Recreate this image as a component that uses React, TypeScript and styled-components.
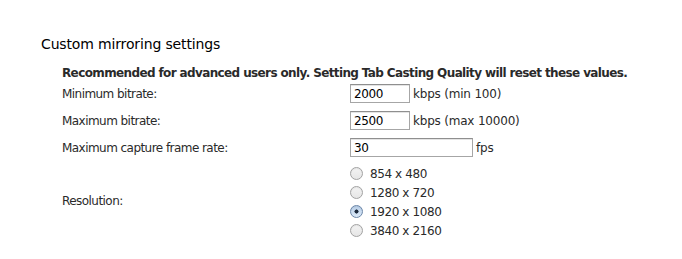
import { useState } from 'react';
import styled, { createGlobalStyle } from 'styled-components';

const GlobalStyle = createGlobalStyle`
  html, body {
    margin: 0;
    padding: 0;
    background: #fff;
  }
  body {
    font-family: 'DejaVu Sans', 'Liberation Sans', sans-serif;
    color: #000;
  }
`;

const Section = styled.section`
  padding: 34px 0 0 41px;
`;

const Title = styled.h3`
  margin: 0;
  font-size: 14px;
  font-weight: normal;
  line-height: 20px;
  letter-spacing: -0.15px;
  color: #000;
`;

const Body = styled.div`
  margin: 10px 0 0 21px;
`;

const Note = styled.div`
  font-size: 12px;
  font-weight: bold;
  line-height: 18px;
  color: #2a2a2a;
  letter-spacing: -0.62px;
`;

const Grid = styled.div`
  display: grid;
  grid-template-columns: 288px auto;
  align-items: center;
  margin-top: -2px;
`;

const Label = styled.label<{ $height?: number }>`
  font-size: 12px;
  line-height: 16px;
  color: #2a2a2a;
  letter-spacing: -0.55px;
  height: ${(p) => (p.$height ? `${p.$height}px` : 'auto')};
  display: flex;
  align-items: center;
`;

const Field = styled.div<{ $height: number }>`
  display: flex;
  align-items: center;
  height: ${(p) => p.$height}px;
`;

const TextInput = styled.input<{ $width: number }>`
  box-sizing: border-box;
  width: ${(p) => p.$width}px;
  height: 19px;
  margin: 0 3px 0 0;
  padding: 1px 3px 0;
  border: 1px solid #a6a6a6;
  border-top-color: #8f8f8f;
  box-shadow: inset 0 1px 0 #e4e4e4;
  background: #fff;
  font-family: 'DejaVu Sans', sans-serif;
  font-size: 12px;
  letter-spacing: -0.4px;
  color: #000;
  outline: none;
`;

const Unit = styled.span`
  font-size: 12px;
  color: #2a2a2a;
  letter-spacing: -0.2px;
`;

const RadioList = styled.div`
  display: flex;
  flex-direction: column;
  padding: 3px 0 0;
`;

const RadioRow = styled.label`
  display: flex;
  align-items: center;
  height: 19px;
  font-size: 12px;
  color: #2a2a2a;
  letter-spacing: -0.4px;
  cursor: default;
`;

const RadioDot = styled.span<{ $checked: boolean }>`
  box-sizing: border-box;
  width: 13px;
  height: 13px;
  margin-right: 7px;
  border-radius: 50%;
  border: 1px solid ${(p) => (p.$checked ? '#6b86a8' : '#a2a2a2')};
  background: ${(p) =>
    p.$checked
      ? 'radial-gradient(circle at 50% 50%, #1c2a3e 0 1.8px, transparent 2.3px), linear-gradient(#b9cfe8, #dbe9f8)'
      : 'linear-gradient(#f3f3f3, #e6e6e6)'};
  box-shadow: inset 0 1px 1px rgba(0, 0, 0, 0.06);
`;

const HiddenRadio = styled.input`
  position: absolute;
  opacity: 0;
  width: 0;
  height: 0;
  margin: 0;
`;

const resolutions = ['854 x 480', '1280 x 720', '1920 x 1080', '3840 x 2160'];

export default function App() {
  const [res, setRes] = useState('1920 x 1080');
  const [minRate, setMinRate] = useState('2000');
  const [maxRate, setMaxRate] = useState('2500');
  const [fps, setFps] = useState('30');

  return (
    <>
      <GlobalStyle />
      <Section>
        <Title>Custom mirroring settings</Title>
        <Body>
          <Note>
            Recommended for advanced users only. Setting Tab Casting Quality will reset these values.
          </Note>
          <Grid>
            <Label $height={27}>Minimum bitrate:</Label>
            <Field $height={27}>
              <TextInput $width={60} value={minRate} onChange={(e) => setMinRate(e.target.value)} />
              <Unit>kbps (min 100)</Unit>
            </Field>
            <Label $height={27}>Maximum bitrate:</Label>
            <Field $height={27}>
              <TextInput $width={60} value={maxRate} onChange={(e) => setMaxRate(e.target.value)} />
              <Unit>kbps (max 10000)</Unit>
            </Field>
            <Label $height={27}>Maximum capture frame rate:</Label>
            <Field $height={27}>
              <TextInput $width={123} value={fps} onChange={(e) => setFps(e.target.value)} />
              <Unit>fps</Unit>
            </Field>
            <Label>Resolution:</Label>
            <RadioList>
              {resolutions.map((r) => (
                <RadioRow key={r}>
                  <HiddenRadio
                    type="radio"
                    name="resolution"
                    checked={res === r}
                    onChange={() => setRes(r)}
                  />
                  <RadioDot $checked={res === r} />
                  {r}
                </RadioRow>
              ))}
            </RadioList>
          </Grid>
        </Body>
      </Section>
    </>
  );
}
